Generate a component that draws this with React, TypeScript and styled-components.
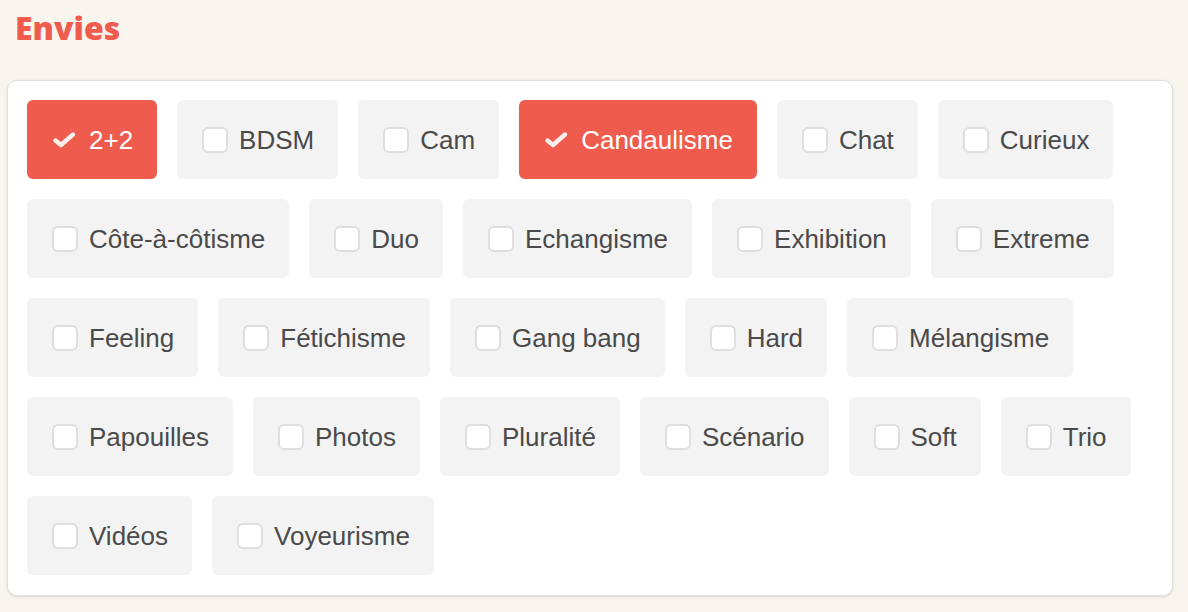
import React, { useState } from "react";
import styled, { createGlobalStyle } from "styled-components";

const GlobalStyle = createGlobalStyle`
  html, body {
    margin: 0;
    padding: 0;
    background: #f8f4ee;
  }
  body {
    font-family: "Liberation Sans", Arial, sans-serif;
  }
`;

const Page = styled.div`
  width: 1188px;
  height: 612px;
  padding: 6px 15px 0 7px;
  box-sizing: border-box;
  background: #f8f4ee;
`;

const Title = styled.h2`
  margin: 0 0 0 8px;
  height: 74px;
  font-family: "Open Sans", "DejaVu Sans", sans-serif;
  font-weight: 800;
  font-size: 32px;
  line-height: 44px;
  color: #ef5b4c;
`;

const Card = styled.div`
  width: 1166px;
  height: 516px;
  box-sizing: border-box;
  background: #fff;
  border: 1px solid #e2e0dd;
  border-radius: 10px;
  box-shadow: 0 1px 3px rgba(0, 0, 0, 0.12);
  padding: 19px 19px;
  display: flex;
  flex-wrap: wrap;
  align-content: flex-start;
  gap: 20px 20px;
`;

const Chip = styled.label<{ $checked: boolean }>`
  display: flex;
  align-items: center;
  gap: 12px;
  height: 79px;
  padding: 0 24px 0 25px;
  box-sizing: border-box;
  border-radius: 6px;
  background: ${(p) => (p.$checked ? "#ef5b4c" : "#f3f3f3")};
  color: ${(p) => (p.$checked ? "#fff" : "#4a4a4a")};
  font-size: 26px;
  cursor: pointer;
  user-select: none;
`;

const Box = styled.span`
  width: 26px;
  height: 26px;
  box-sizing: border-box;
  border: 2px solid #dedede;
  border-radius: 6px;
  background: #fff;
  flex-shrink: 0;
  margin-right: -1px;
`;

const Tick = styled.svg`
  width: 25px;
  height: 18px;
  flex-shrink: 0;
`;

const Label = styled.span`
  line-height: 30px;
`;

const items = [
  "2+2",
  "BDSM",
  "Cam",
  "Candaulisme",
  "Chat",
  "Curieux",
  "Côte-à-côtisme",
  "Duo",
  "Echangisme",
  "Exhibition",
  "Extreme",
  "Feeling",
  "Fétichisme",
  "Gang bang",
  "Hard",
  "Mélangisme",
  "Papouilles",
  "Photos",
  "Pluralité",
  "Scénario",
  "Soft",
  "Trio",
  "Vidéos",
  "Voyeurisme",
];

const App: React.FC = () => {
  const [selected, setSelected] = useState<string[]>(["2+2", "Candaulisme"]);

  const toggle = (name: string) => {
    setSelected((s) => (s.includes(name) ? s.filter((n) => n !== name) : [...s, name]));
  };

  return (
    <>
      <GlobalStyle />
      <Page>
        <Title>Envies</Title>
        <Card>
          {items.map((name) => {
            const checked = selected.includes(name);
            return (
              <Chip key={name} $checked={checked} onClick={() => toggle(name)}>
                {checked ? (
                  <Tick viewBox="0 0 25 18">
                    <path
                      d="M3.5 9.5 L9 14 L21 3.5"
                      fill="none"
                      stroke="#fff"
                      strokeWidth="4.4"
                      strokeLinecap="round"
                      strokeLinejoin="round"
                      opacity="0.9"
                    />
                  </Tick>
                ) : (
                  <Box />
                )}
                <Label>{name}</Label>
              </Chip>
            );
          })}
        </Card>
      </Page>
    </>
  );
};

export default App;
